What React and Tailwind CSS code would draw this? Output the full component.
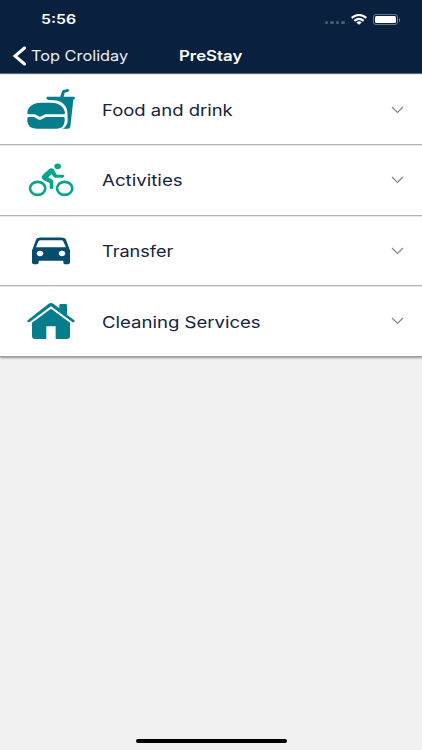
import React from 'react';

const BurgerIcon = () => (
  <svg viewBox="0 0 210 180" className="h-[60px] w-[70px]" fill="#057d8d">
    <path d="M37 100 C37 81 54 68 77 68 H109 C132 68 149 81 150 100 Q150 103 146 103 H91 L79 109 Q75 111 71 109 L60 103 H41 Q37 103 37 100 Z" />
    <path d="M37 115 Q37 111 42 111 H57 L69 118 Q74 121 80 118 L93 111 H145 Q149 111 149 115 V124 Q147 146 126 146 H64 Q39 146 37 124 Z" />
    <path d="M98 50 H136 L141 34 Q142 31 145 30 L158 27 Q163 28 162 32 Q161 35 158 36 L149 38 L146 50 H176 Q180 51 180 55 Q179 59 175 59 L166 140 Q165 146 158 146 H143 Q158 137 158 122 L157 95 C154 74 137 61 117 61 L101 60 Q94 59 94 55 Q94 51 98 50 Z" />
  </svg>
);

const BikeIcon = () => (
  <svg viewBox="0 0 210 180" className="h-[60px] w-[70px]" fill="none" stroke="#08a587">
    <ellipse cx="68" cy="115" rx="23" ry="19.5" strokeWidth="8" />
    <ellipse cx="149" cy="115" rx="23" ry="19.5" strokeWidth="8" />
    <ellipse cx="128" cy="49" rx="10" ry="8.5" fill="#08a587" stroke="none" />
    <path d="M83 75 L103 57 Q110 52 116 58 L125 74 H144 Q148 75 148 78 Q147 83 142 83 H120 Q116 82 114 79 L110 73 L100 82 L112 89 Q115 92 115 96 V113 Q114 118 109 118 Q104 117 104 112 V99 L85 90 Q77 84 83 75 Z" fill="#08a587" stroke="none" />
  </svg>
);

const CarIcon = () => (
  <svg viewBox="0 1.5 210 180" className="h-[60px] w-[70px]" fill="#044d70">
    <path
      fillRule="evenodd"
      d="M63 58 Q66 51 77 51 H138 Q150 51 153 58 L165 90 V126 Q165 131 159 131 H149 Q145 131 145 126 V121 H71 V126 Q71 131 66 131 H57 Q51 131 51 126 V90 Z M77 59 Q72 59 70 63 L63 80 H153 L145 63 Q144 59 139 59 Z M75 91 C69 91 65 95 65 99 S69 107 75 107 S85 103 85 99 S81 91 75 91 Z M141 91 C135 91 131 95 131 99 S135 107 141 107 S151 103 151 99 S147 91 141 91 Z"
    />
  </svg>
);

const HouseIcon = () => (
  <svg viewBox="0 3 210 180" className="h-[60px] w-[70px]" fill="#057d8d">
    <path d="M38 91 L101 41 Q108 37 115 41 L133 55 V46 Q133 42 137 42 H152 Q156 42 156 46 V74 L178 91 Q181 94 178 96 Q175 98 172 96 L108 49 L44 96 Q40 98 38 96 Q35 94 38 91 Z" />
    <path d="M51 98 L108 56 L165 98 V138 Q165 147 155 147 H122 V109 H94 V147 H60 Q51 147 51 138 Z" />
  </svg>
);

const items = [
  { label: 'Food and drink', Icon: BurgerIcon, row: 'h-[71px] pt-px border-[#b2b2b2]', text: 'mt-px scale-x-[1.155]' },
  { label: 'Activities', Icon: BikeIcon, row: 'h-[71px] border-[#b2b2b2]', text: 'scale-x-[1.168]' },
  { label: 'Transfer', Icon: CarIcon, row: 'h-[70px] border-[#b2b2b2]', text: 'mt-px scale-x-[1.13]' },
  { label: 'Cleaning Services', Icon: HouseIcon, row: 'h-[71px] border-[#a0a0a0]', text: 'mt-px scale-x-[1.16]' },
];

const StatusBar = () => (
  <div className="flex h-[37px] items-center justify-between pl-[40.5px] pr-[22px] pt-[2px]">
    <span className="origin-left scale-x-[1.22] text-[13px] font-semibold">5:56</span>
    <div className="flex items-center">
      <div className="mr-[6px] mt-[6px] flex gap-[2px]">
        {[0, 1, 2, 3].map((dot) => (
          <span key={dot} className="h-[3px] w-[3.5px] rounded-full bg-[#4b5c76]" />
        ))}
      </div>
      <svg viewBox="0 0 48 32" className="mr-[6px] h-[11px] w-4" fill="none" stroke="white" strokeWidth="6.5">
        <path d="M2 11 Q24 -6 46 11" />
        <path d="M10 20 Q24 8 38 20" />
        <path d="M16 25 Q24 18 32 25 L24 32 Z" fill="white" stroke="none" />
      </svg>
      <div className="flex h-[11px] w-[25px] rounded-[3px] border border-[#66758c] p-px">
        <div className="w-full rounded-[1.5px] bg-white" />
      </div>
      <span className="ml-px h-1 w-[1.5px] rounded-r-full bg-[#66758c]" />
    </div>
  </div>
);

const NavBar = () => (
  <div className="relative flex h-9 items-center pl-3 pt-px">
    <svg viewBox="0 0 14 20" className="h-5 w-[14px]" fill="none" stroke="white" strokeWidth="3">
      <path d="M12.5 2 L3 10 L12.5 18" strokeLinecap="round" />
    </svg>
    <span className="ml-[5px] mt-px origin-left scale-x-[1.125] text-[14.5px] text-[#e8edf5]">Top Croliday</span>
    <h1 className="absolute left-[179px] mt-px origin-left scale-x-[1.16] text-[14.5px] font-semibold">PreStay</h1>
  </div>
);

const App = () => {
  return (
    <div className="flex h-[750px] w-[422px] flex-col overflow-hidden bg-[#f1f1f1] font-['Inter',sans-serif]">
      <header className="h-[74px] shrink-0 border-b border-[#5f6e84] bg-[#09213f] text-white">
        <StatusBar />
        <NavBar />
      </header>

      <main className="shadow-[0_1px_2px_rgba(0,0,0,0.4)]">
        {items.map(({ label, Icon, row, text }) => (
          <div key={label} className={`flex items-center border-b bg-white pl-[15px] pr-[18px] shadow-[inset_0_1px_0_#e6e6e6] ${row}`}>
            <Icon />
            <span className={`ml-[17px] origin-left whitespace-nowrap text-base text-[#14233f] ${text}`}>{label}</span>
            <svg viewBox="0 0 13 8" className="ml-auto h-2 w-[13px]" fill="none" stroke="#858585" strokeWidth="1.2">
              <path d="M1 1 L6.5 6.5 L12 1" />
            </svg>
          </div>
        ))}
      </main>

      <div className="mx-auto mb-[7px] mt-auto h-1 w-[151px] rounded-full bg-black" />
    </div>
  );
};

export default App;
